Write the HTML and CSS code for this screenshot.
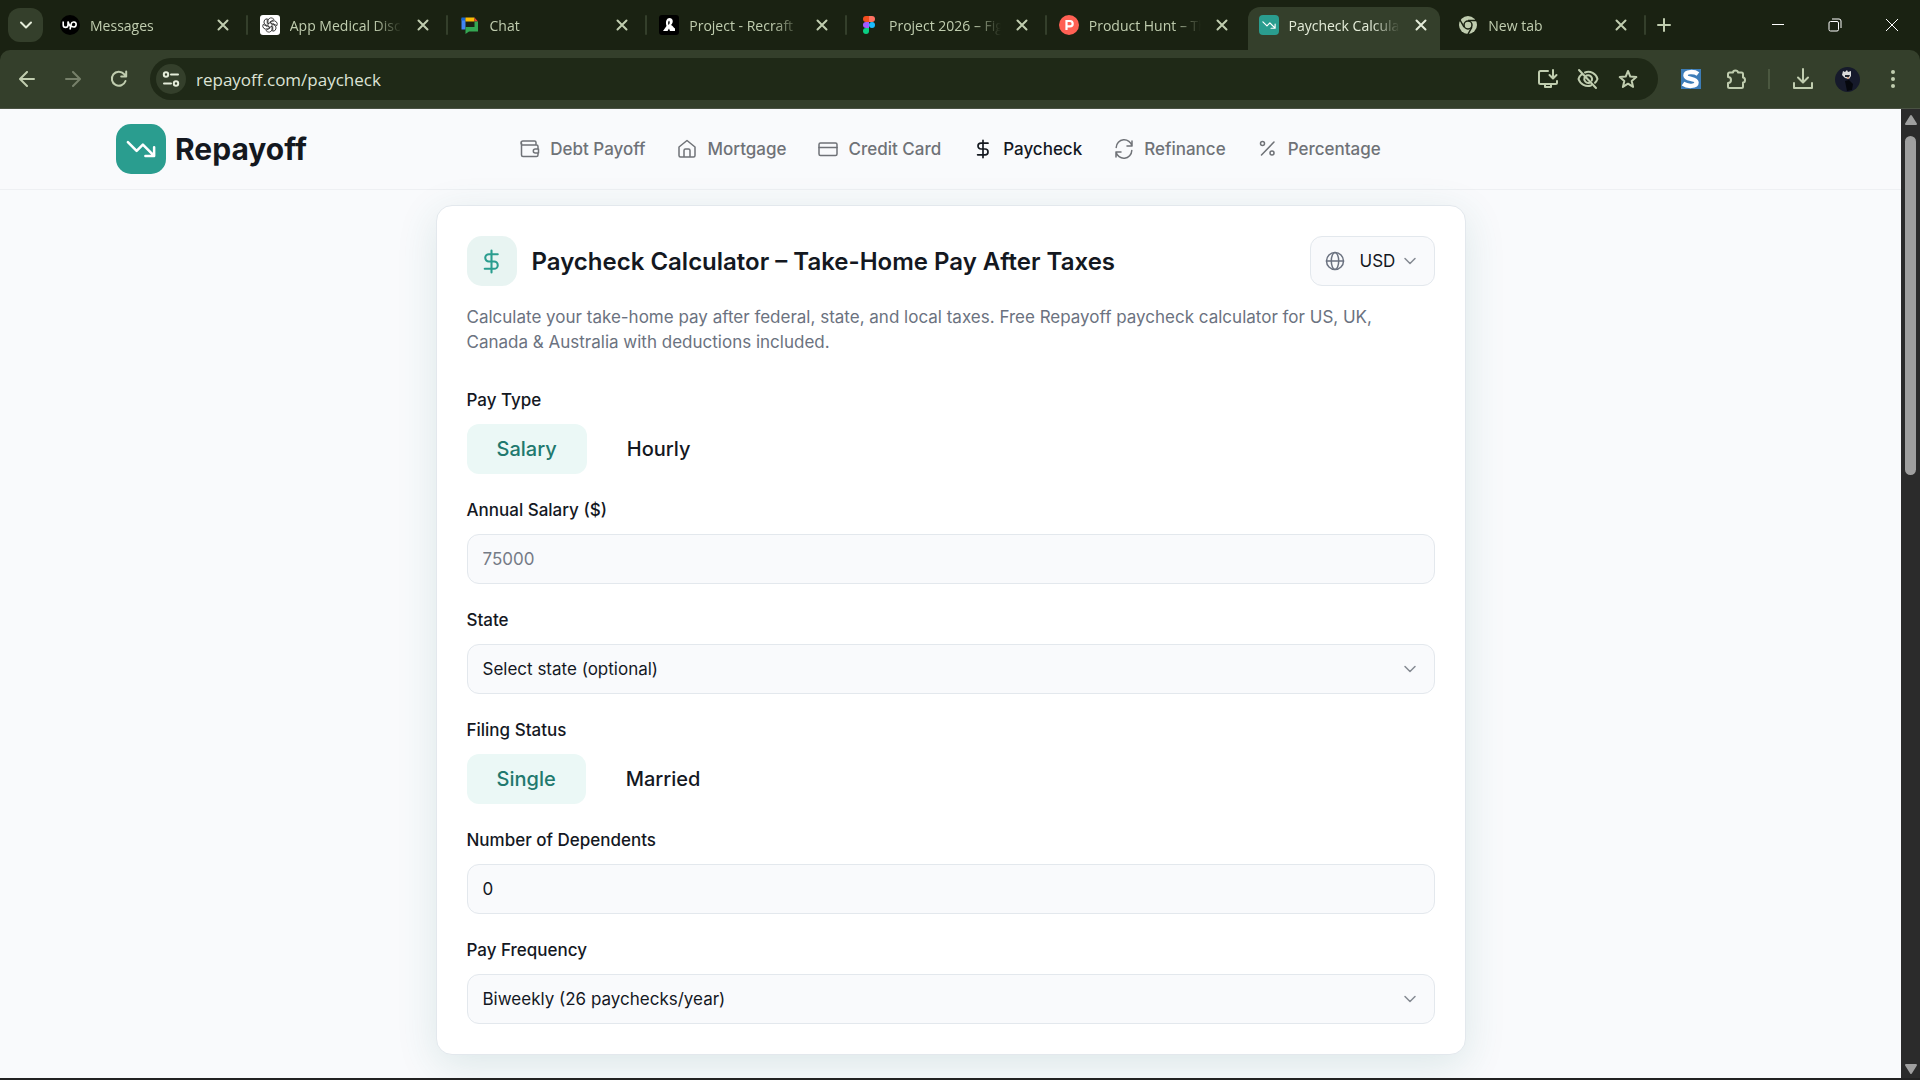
FILE: index.html
```html
<!DOCTYPE html>
<html lang="en">
<head>
    <meta charset="UTF-8">
    <meta name="viewport" content="width=device-width, initial-scale=1.0">
    <title>Paycheck Calculator</title>
    <link rel="stylesheet" href="styles.css">
</head>
<body>
    <!-- shared shapes -->
    <svg class="sprite" aria-hidden="true">
        <symbol id="close" viewBox="0 0 12 12"><path d="M1.5 1.5l9 9M10.5 1.5l-9 9"/></symbol>
        <symbol id="chevron" viewBox="0 0 14 14"><path d="M2 4.5l5 5 5-5"/></symbol>
        <symbol id="trend" viewBox="0 0 24 24"><path d="M1.5 6.5l7 7 5-5 9 9M15.500 17.500h7v-7"/></symbol>
        <symbol id="dollar" viewBox="0 0 24 24"><path d="M12 1.500v21M18 5H9.500a3.500 3.500 0 0 0 0 7h5a3.500 3.500 0 0 1 0 7H5.500"/></symbol>
        <symbol id="figma" viewBox="0 0 20 20">
            <path fill="#f24e1e" d="M10 1H7a3 3 0 0 0 0 6h3z"/>
            <path fill="#ff7262" d="M10 1h3a3 3 0 0 1 0 6h-3z"/>
            <path fill="#a259ff" d="M10 7H7a3 3 0 0 0 0 6h3z"/>
            <circle fill="#1abcfe" cx="13" cy="10" r="3"/>
            <path fill="#0acf83" d="M10 13H7a3 3 0 1 0 3 3z"/>
        </symbol>
    </svg>

    <div class="tab-strip">
        <button type="button" class="tab-search" aria-label="Search tabs"><svg class="line bold" width="14" height="14"><use href="#chevron"/></svg></button>
        <div class="tabs">
            <div class="tab">
                <svg class="favicon" viewBox="0 0 20 20"><circle cx="10" cy="10" r="10" fill="#000"/><path d="M3.200 6.500v3.500a2.400 2.400 0 0 0 4.800 0V6.500c.6 2.500 1.500 4 2.800 5.500M10 14.500l1.200-5.500a2.500 2.500 0 1 1 2.500 3c-1.500 0-2.700-1-3.500-2.200" fill="none" stroke="#fff" stroke-width="1.600"/></svg>
                <span class="tab-title">Messages</span>
                <button type="button" class="tab-close" aria-label="Close"><svg class="line" width="12" height="12"><use href="#close"/></svg></button>
            </div>
            <div class="tab">
                <svg class="favicon" viewBox="0 0 20 20"><rect width="20" height="20" rx="3" fill="#fff"/><g fill="none" stroke="#222" stroke-width=".8"><path id="petal" d="M8 11.200V5.800a3.200 3.200 0 0 1 6-1.300L9.900 6.900"/><use href="#petal" transform="rotate(60 10 10)"/><use href="#petal" transform="rotate(120 10 10)"/><use href="#petal" transform="rotate(180 10 10)"/><use href="#petal" transform="rotate(240 10 10)"/><use href="#petal" transform="rotate(300 10 10)"/></g></svg>
                <span class="tab-title">App Medical Discovery</span>
                <button type="button" class="tab-close" aria-label="Close"><svg class="line" width="12" height="12"><use href="#close"/></svg></button>
            </div>
            <div class="tab">
                <svg class="favicon" viewBox="0 0 20 20"><path fill="#4285f4" d="M1.500 3.500h4v11h-4z"/><path fill="#1967d2" d="M1.500 2.500h4v3h-4z"/><path fill="#fbbc04" d="M5.500 2.500h9v4h-9z"/><path fill="#ea4335" d="M14.500 2.500l3.500 4h-3.500z"/><path fill="#34a853" d="M14.500 6.500H18v10H9l-3.500 2.500v-7h9z"/></svg>
                <span class="tab-title">Chat</span>
                <button type="button" class="tab-close" aria-label="Close"><svg class="line" width="12" height="12"><use href="#close"/></svg></button>
            </div>
            <div class="tab">
                <svg class="favicon" viewBox="0 0 20 20"><rect width="20" height="20" rx="3" fill="#000"/><path d="M4 16l3.500-5C6 6 8 3 10.500 3c3.500 0 4.500 4.500 1.500 7 2 .5 2.500 3 4 3.500V16h-5l-1-2.500L8.500 16zM10 5.500c-1 1-1 3-.5 4.500 1.500-1 1.500-3.500.5-4.500z" fill="#fff" fill-rule="evenodd"/></svg>
                <span class="tab-title">Project - Recraft</span>
                <button type="button" class="tab-close" aria-label="Close"><svg class="line" width="12" height="12"><use href="#close"/></svg></button>
            </div>
            <div class="tab">
                <svg class="favicon"><use href="#figma"/></svg>
                <span class="tab-title">Project 2026 – Figma</span>
                <button type="button" class="tab-close" aria-label="Close"><svg class="line" width="12" height="12"><use href="#close"/></svg></button>
            </div>
            <div class="tab no-divider">
                <svg class="favicon" viewBox="0 0 20 20"><circle cx="10" cy="10" r="10" fill="#ff6154"/><path d="M7.500 15V6H11a2.700 2.700 0 0 1 0 5.400H7.500" fill="none" stroke="#fff" stroke-width="2.200"/></svg>
                <span class="tab-title">Product Hunt – The best</span>
                <button type="button" class="tab-close" aria-label="Close"><svg class="line" width="12" height="12"><use href="#close"/></svg></button>
            </div>
            <div class="tab active no-divider">
                <span class="favicon teal"><svg class="line" width="14" height="14"><use href="#trend"/></svg></span>
                <span class="tab-title">Paycheck Calculator</span>
                <button type="button" class="tab-close" aria-label="Close"><svg class="line" width="12" height="12"><use href="#close"/></svg></button>
            </div>
            <div class="tab">
                <svg class="favicon" viewBox="0 0 20 20"><circle cx="10" cy="10" r="9" fill="#c0cdaf"/><circle cx="10" cy="10" r="4" fill="none" stroke="#1a2212" stroke-width="1.500"/><path d="M10 5.500h8.500M6.100 12.200L2 5M13.900 12.200L9.800 19.500" stroke="#1a2212" stroke-width="1.500"/></svg>
                <span class="tab-title">New tab</span>
                <button type="button" class="tab-close" aria-label="Close"><svg class="line" width="12" height="12"><use href="#close"/></svg></button>
            </div>
        </div>
        <button type="button" class="new-tab" aria-label="New tab"><svg class="line" width="14" height="14" viewBox="0 0 14 14"><path d="M7 1v12M1 7h12"/></svg></button>
        <div class="window-buttons">
            <button type="button" aria-label="Minimize"><svg width="14" height="14" viewBox="0 0 14 14"><path d="M1 6.500h12"/></svg></button>
            <button type="button" aria-label="Restore"><svg width="14" height="14" viewBox="0 0 14 14"><rect x="1" y="3.500" width="9.500" height="9.500" rx="1.500"/><path d="M4 1h7a2 2 0 0 1 2 2v7"/></svg></button>
            <button type="button" aria-label="Close window"><svg width="14" height="14" viewBox="0 0 14 14"><path d="M1 1l12 12M13 1L1 13"/></svg></button>
        </div>
    </div>

    <div class="toolbar">
        <div class="nav-buttons">
            <button type="button" aria-label="Back"><svg class="line" width="16" height="16" viewBox="0 0 16 16"><path d="M15 8H1.500M8 1L1 8l7 7"/></svg></button>
            <button type="button" class="faded" aria-label="Forward"><svg class="line" width="16" height="16" viewBox="0 0 16 16"><path d="M1 8h13.500M8 1l7 7-7 7"/></svg></button>
            <button type="button" aria-label="Reload"><svg class="line" width="18" height="18" viewBox="0 0 18 18"><path d="M15.500 11A7 7 0 1 1 14 4l2 2M16.200 1.500v5h-5"/></svg></button>
        </div>
        <div class="address-bar">
            <button type="button" class="site-info" aria-label="Site information"><svg class="line" width="18" height="16" viewBox="0 0 18 16"><circle cx="4" cy="3.500" r="2.200"/><path d="M9 3.500h7M2 12.500h7"/><circle cx="14" cy="12.500" r="2.200"/></svg></button>
            <input type="text" class="url" aria-label="Address" value="repayoff.com/paycheck">
            <button type="button" aria-label="Install"><svg class="line" width="20" height="20" viewBox="0 0 20 20"><path d="M10 2H2.500A1.500 1.500 0 0 0 1 3.500v10A1.500 1.500 0 0 0 2.500 15h15a1.500 1.500 0 0 0 1.500-1.500V12M15 1v8M11.500 6l3.500 3.500L18.500 6M7 15.500v2.500h6v-2.500"/></svg></button>
            <button type="button" aria-label="Tracking protection"><svg class="line" width="22" height="22" viewBox="0 0 22 22"><path d="M2 2l17 18M8 4.500A9.500 9.500 0 0 1 20.500 11a10 10 0 0 1-2.500 3.800M5 6a10 10 0 0 0-3.500 5A10 10 0 0 0 14 17.500M9.500 7.500a4 4 0 0 1 5.300 5M7.500 9.500a4 4 0 0 0 5 5.200"/></svg></button>
            <button type="button" aria-label="Bookmark"><svg class="line" width="20" height="20" viewBox="0 0 20 20"><path d="M10 2l2.300 5.600 6 .5-4.600 3.900 1.400 5.900L10 14.700l-5.100 3.200L6.300 12 1.700 8.100l6-.5z"/></svg></button>
        </div>
        <div class="extensions">
            <button type="button" aria-label="Extension"><svg width="20" height="20" viewBox="0 0 20 20"><rect width="20" height="20" fill="#3d7db8"/><path d="M17 5C13.500 2.500 4.500 2 4.500 6.500c0 4.500 11 2.200 11 7 0 4.300-9 4.300-13.500 1.200" fill="none" stroke="#fff" stroke-width="4.500"/></svg></button>
            <button type="button" aria-label="Extensions"><svg class="line" width="22" height="22" viewBox="0 0 22 22"><path d="M4.500 4.500H8a2.500 2 0 0 1 5 0h3.500A1.500 1.500 0 0 1 18 6v3.500a2 2.500 0 0 1 0 5v4a1.500 1.500 0 0 1-1.500 1.500h-12A1.500 1.500 0 0 1 3 18.500V15a3 3 0 0 0 0-6V6a1.500 1.500 0 0 1 1.500-1.500z"/></svg></button>
            <span class="toolbar-divider"></span>
            <button type="button" aria-label="Downloads"><svg class="line" width="22" height="22" viewBox="0 0 22 22"><path d="M11 1v13M6 9.500l5 5 5-5M2 15v5h18v-5"/></svg></button>
            <button type="button" aria-label="Profile"><svg width="25" height="25" viewBox="0 0 25 25"><circle cx="12.500" cy="12.500" r="12.500" fill="#161a2b"/><path d="M10 14l4-1 4 4-1 6-5 1z" fill="#05070c"/><path d="M7 8l1-4 2 1 2-2 1 2 3-1v5l-2 3-4-1z" fill="#dcdcdc"/><path d="M10 8h5l-1 2h-4z" fill="#20242e"/><path d="M12 10h2v2h-2z" fill="#c79a83"/></svg></button>
            <button type="button" aria-label="Menu"><svg width="4" height="18" viewBox="0 0 4 18"><g fill="#c0cdaf"><circle cx="2" cy="2" r="2"/><circle cx="2" cy="9" r="2"/><circle cx="2" cy="16" r="2"/></g></svg></button>
        </div>
    </div>

    <div class="viewport">
        <div class="page">
            <header class="site-header">
                <a href="#" class="brand">
                    <span class="brand-icon"><svg class="line" width="30" height="30"><use href="#trend"/></svg></span>
                    Repayoff
                </a>
                <nav class="site-nav">
                    <a href="#"><svg class="line" width="20" height="20" viewBox="0 0 20 20"><path d="M16 6V3.500A1.500 1.500 0 0 0 14.500 2H3a1.500 1.500 0 0 0 0 4h13.500A1.500 1.500 0 0 1 18 7.500V10M1.500 4v12A1.500 1.500 0 0 0 3 17.500h13.500A1.500 1.500 0 0 0 18 16v-2M18.500 10h-3.200a2 2 0 0 0 0 4h3.200z"/></svg>Debt Payoff</a>
                    <a href="#"><svg class="line" width="20" height="20" viewBox="0 0 20 20"><path d="M2 8l8-6.500L18 8v8.500a1.500 1.500 0 0 1-1.500 1.500h-13A1.500 1.500 0 0 1 2 16.500zM7 18v-6.500A1.500 1.500 0 0 1 8.500 10h3a1.500 1.500 0 0 1 1.500 1.500V18"/></svg>Mortgage</a>
                    <a href="#"><svg class="line" width="20" height="20" viewBox="0 0 20 20"><rect x="1" y="4" width="18" height="12.500" rx="1.500"/><path d="M1 8.500h18"/></svg>Credit Card</a>
                    <a href="#" class="current"><svg class="line" width="20" height="20"><use href="#dollar"/></svg>Paycheck</a>
                    <a href="#"><svg class="line" width="20" height="20" viewBox="0 0 20 20"><path d="M18 2v5h-5M18 7A8 8 0 0 0 2.200 8.500M2 18v-5h5M2 13a8 8 0 0 0 15.800-1.500"/></svg>Refinance</a>
                    <a href="#"><svg class="line" width="20" height="20" viewBox="0 0 20 20"><circle cx="4.500" cy="4.500" r="2"/><circle cx="14" cy="14" r="2"/><path d="M16 3L3.500 16"/></svg>Percentage</a>
                </nav>
            </header>

            <main class="card">
                <div class="card-header">
                    <span class="card-icon"><svg class="line" width="25" height="25"><use href="#dollar"/></svg></span>
                    <h1>Paycheck Calculator – Take-Home Pay After Taxes</h1>
                    <div class="currency">
                        <svg class="line globe" width="20" height="20" viewBox="0 0 20 20"><circle cx="10" cy="10" r="8.500"/><ellipse cx="10" cy="10" rx="3.700" ry="8.500"/><path d="M1.500 10h17"/></svg>
                        <select aria-label="Currency">
                            <option>USD</option>
                            <option>GBP</option>
                            <option>CAD</option>
                            <option>AUD</option>
                        </select>
                        <svg class="line chevron" width="14" height="14"><use href="#chevron"/></svg>
                    </div>
                </div>
                <p class="intro">Calculate your take-home pay after federal, state, and local taxes. Free Repayoff paycheck calculator for US, UK, Canada &amp; Australia with deductions included.</p>

                <form id="paycheckForm">
                    <div class="form-group" role="group" aria-labelledby="payType">
                        <span class="label" id="payType">Pay Type</span>
                        <div class="toggle">
                            <button type="button" class="selected">Salary</button>
                            <button type="button">Hourly</button>
                        </div>
                    </div>
                    <div class="form-group">
                        <label for="salary">Annual Salary ($)</label>
                        <input type="text" id="salary" placeholder="75000">
                    </div>
                    <div class="form-group">
                        <label for="state">State</label>
                        <div class="select">
                            <select id="state">
                                <option>Select state (optional)</option>
                            </select>
                            <svg class="line chevron" width="14" height="14"><use href="#chevron"/></svg>
                        </div>
                    </div>
                    <div class="form-group" role="group" aria-labelledby="filing">
                        <span class="label" id="filing">Filing Status</span>
                        <div class="toggle">
                            <button type="button" class="selected">Single</button>
                            <button type="button">Married</button>
                        </div>
                    </div>
                    <div class="form-group">
                        <label for="dependents">Number of Dependents</label>
                        <input type="text" id="dependents" value="0">
                    </div>
                    <div class="form-group">
                        <label for="frequency">Pay Frequency</label>
                        <div class="select">
                            <select id="frequency">
                                <option>Biweekly (26 paychecks/year)</option>
                            </select>
                            <svg class="line chevron" width="14" height="14"><use href="#chevron"/></svg>
                        </div>
                    </div>
                </form>
            </main>
        </div>
        <div class="scrollbar">
            <svg width="14" height="12" viewBox="0 0 14 12"><path d="M7 2l5 8H2z"/></svg>
            <div class="scroll-track"><div class="scroll-thumb"></div></div>
            <svg width="14" height="12" viewBox="0 0 14 12"><path d="M7 10l5-8H2z"/></svg>
        </div>
    </div>
</body>
</html>
```

FILE: styles.css
```css
* {
    box-sizing: border-box;
}
body {
    margin: 0;
    height: 100vh;
    display: flex;
    flex-direction: column;
    overflow: hidden;
    font-family: Inter, "Liberation Sans", sans-serif;
    color: #14181f;
    background-color: #1a2212;
}
button, input, select {
    font: inherit;
    color: inherit;
    margin: 0;
}
button {
    display: flex;
    align-items: center;
    justify-content: center;
    padding: 0;
    border: none;
    background: none;
    cursor: pointer;
}
a {
    color: inherit;
    text-decoration: none;
}
svg {
    display: block;
    flex: none;
}
.sprite {
    position: absolute;
    width: 0;
    height: 0;
}
.line {
    fill: none;
    stroke: currentColor;
    stroke-width: 2;
    stroke-linecap: round;
    stroke-linejoin: round;
}

/* browser tabs */
.tab-strip {
    display: flex;
    align-items: center;
    flex: none;
    height: 50px;
    padding-left: 8px;
    color: #c0cdaf;
    font-family: "Open Sans", "Noto Sans", sans-serif;
    font-size: 14px;
}
.tab-search {
    width: 35px;
    height: 34px;
    margin-right: 5px;
    border-radius: 12px;
    background-color: #343f2b;
    color: #e4ecd9;
}
.tabs {
    display: flex;
    flex: 0 1 1598px;
    align-self: stretch;
    min-width: 0;
}
.tab {
    flex: 1 1 0;
    min-width: 0;
    display: flex;
    align-items: center;
    padding-left: 12px;
}
.tab::after {
    content: "";
    width: 2px;
    height: 20px;
    border-radius: 1px;
    background-color: #343f2b;
}
.no-divider::after {
    background: none;
}
.favicon {
    width: 20px;
    height: 20px;
    flex: none;
}
.teal {
    display: flex;
    align-items: center;
    justify-content: center;
    border-radius: 4px;
    background-color: #2a9d8f;
    color: #fff;
}
.tab-title {
    flex: 1;
    margin-left: 10px;
    overflow: hidden;
    white-space: nowrap;
    mask-image: linear-gradient(to right, #000 75%, transparent);
}
.tab-close {
    width: 24px;
    height: 24px;
    margin: 0 11px 0 9px;
}
.active {
    position: relative;
    align-self: flex-end;
    height: 43px;
    padding-bottom: 7px;
    color: #e4ecd9;
}
.active::before {
    content: "";
    position: absolute;
    inset: 0 6px 0 1px;
    z-index: -1;
    border-radius: 12px 12px 0 0;
    background-color: #343f2b;
}
.new-tab {
    width: 32px;
    height: 32px;
    margin-left: 2px;
}
.window-buttons {
    display: flex;
    align-self: stretch;
    margin-left: auto;
}
.window-buttons button {
    width: 57px;
}
.window-buttons svg {
    fill: none;
    stroke: #fff;
    stroke-width: 1;
}

/* toolbar */
.toolbar {
    display: flex;
    align-items: center;
    flex: none;
    height: 59px;
    padding: 0 5px 0 4px;
    border-bottom: 1px solid #4a5243;
    border-radius: 10px 10px 0 0;
    background-color: #343f2b;
    color: #c0cdaf;
}
.nav-buttons {
    display: flex;
}
.nav-buttons button {
    width: 46px;
    height: 42px;
}
.faded {
    color: #76806a;
}
.address-bar {
    flex: 1;
    display: flex;
    align-items: center;
    height: 42px;
    margin-left: 8px;
    padding: 0 10px 0 6px;
    border-radius: 21px;
    background-color: #1f2917;
}
.address-bar button {
    width: 40px;
    height: 30px;
}
.address-bar .site-info {
    width: 30px;
    border-radius: 15px;
    background-color: #343f2b;
    color: #e4ecd9;
}
.url {
    flex: 1;
    min-width: 0;
    padding: 0 10px;
    border: none;
    outline: none;
    background: none;
    color: #dde3d5;
    font-family: "Open Sans", "Noto Sans", sans-serif;
    font-size: 17px;
}
.extensions {
    display: flex;
    align-items: center;
    margin-left: 10px;
}
.extensions button {
    width: 45px;
    height: 42px;
}
.toolbar-divider {
    width: 2px;
    height: 20px;
    margin: 0 10px;
    background-color: #4b5840;
}

/* page */
.viewport {
    flex: 1;
    min-height: 0;
    display: flex;
    border-bottom: 2px solid #222;
}
.page {
    flex: 1;
    min-width: 0;
    overflow: hidden;
    background-color: #f9fafc;
}
.site-header {
    display: grid;
    grid-template-columns: 1fr auto 1fr;
    align-items: center;
    padding: 15px 116px;
    border-bottom: 1px solid #eef0f3;
}
.brand {
    display: flex;
    align-items: center;
    gap: 9px;
    font-size: 30px;
    font-weight: 700;
}
.brand-icon, .card-icon {
    display: flex;
    align-items: center;
    justify-content: center;
    flex: none;
    width: 50px;
    height: 50px;
    border-radius: 15px;
}
.brand-icon {
    background-color: #2a9d8f;
    color: #fff;
}
.site-nav {
    display: flex;
    gap: 32px;
    color: #6f7277;
    font-size: 17px;
    font-weight: 500;
}
.site-nav a {
    display: flex;
    align-items: center;
    gap: 10px;
}
.site-nav .line {
    stroke-width: 1.5;
}
.site-nav .current {
    color: #14181f;
}
.site-nav .current .line {
    stroke-width: 2;
}
.card {
    max-width: 1030px;
    margin: 15px auto;
    padding: 30px;
    border: 1px solid #e3e8ed;
    border-radius: 16px;
    background-color: #fff;
    box-shadow: 0 10px 40px rgba(42, 120, 110, 0.14);
}
.card-header {
    display: flex;
    align-items: center;
    gap: 15px;
}
.card-icon {
    background-color: #e8f4f2;
    color: #2a9d8f;
}
h1 {
    flex: 1;
    margin: 0;
    font-size: 24px;
    font-weight: 600;
}
.intro {
    margin: 19px 0 33px;
    color: #6b7280;
    font-size: 17px;
    line-height: 25px;
}
.currency, .select {
    position: relative;
}
.globe {
    position: absolute;
    left: 15px;
    top: 15px;
    color: #6b7280;
    stroke-width: 1.5;
}
.chevron {
    position: absolute;
    right: 18px;
    top: 18px;
    color: #858a92;
    stroke-width: 1.5;
    pointer-events: none;
}
form {
    display: flex;
    flex-direction: column;
    gap: 24px;
    font-size: 17px;
}
.form-group label, .label {
    display: block;
    margin-bottom: 11px;
    font-weight: 500;
    line-height: 25px;
}
.form-group input, .card select {
    display: block;
    width: 100%;
    height: 50px;
    padding: 0 15px;
    border: 1px solid #e3e8ed;
    border-radius: 12px;
    outline: none;
    background-color: #f9fafc;
    appearance: none;
}
.form-group input::placeholder {
    color: #757b86;
}
.card .currency select {
    width: 125px;
    padding-left: 49px;
    font-size: 17px;
}
.toggle {
    display: flex;
    gap: 10px;
}
.toggle button {
    height: 50px;
    padding: 0 30px;
    border-radius: 12px;
    font-size: 20px;
    font-weight: 500;
}
.toggle .selected {
    background-color: #ebf8f6;
    color: #21796e;
}

/* scrollbar */
.scrollbar {
    display: flex;
    flex-direction: column;
    align-items: center;
    width: 19px;
    padding: 5px 0 3px;
    background-color: #2b2b2b;
}
.scrollbar svg {
    fill: #9f9f9f;
    stroke: #9f9f9f;
    stroke-width: 2;
    stroke-linejoin: round;
}
.scroll-track {
    flex: 1;
    margin: 10px 0;
}
.scroll-thumb {
    width: 11px;
    height: 37%;
    border-radius: 6px;
    background-color: #9f9f9f;
}
```
